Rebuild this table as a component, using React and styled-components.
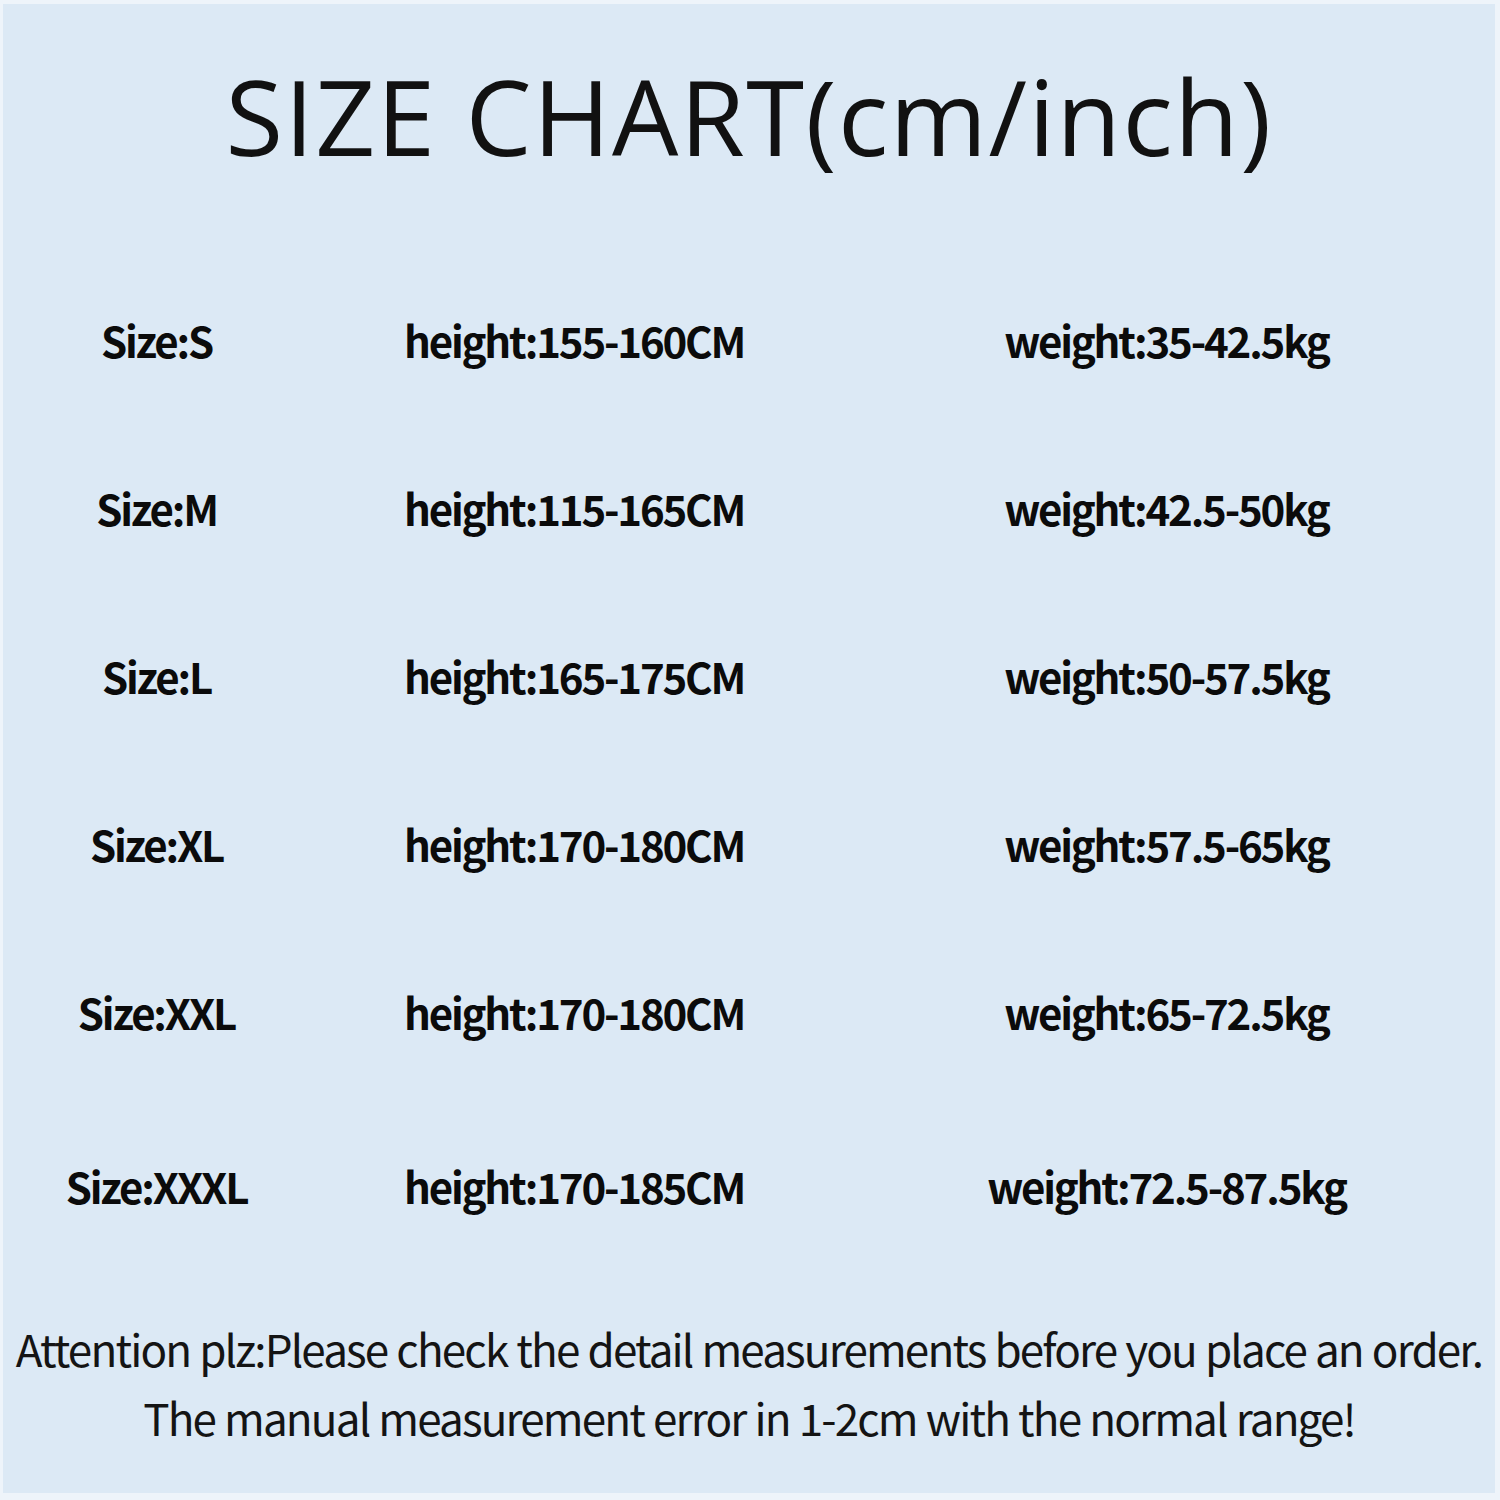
import React from 'react'
import styled, { createGlobalStyle } from 'styled-components';

const Global = createGlobalStyle`
    html, body {
        margin: 0;
        padding: 0;
        background: #ffffff;
    }
`;

const Sheet = styled.div`
    width: 1500px;
    height: 1500px;
    box-sizing: border-box;
    padding: 4px 5px 7px 3px;
    background: #eef4fa;
`;

const Panel = styled.div`
    height: 100%;
    background-color: #dce9f5;
    display: flex;
    flex-direction: column;
    align-items: stretch;
`;

const Title = styled.h1`
    margin: 42px 0 0;
    text-align: center;
    font-family: "Open Sans", "DejaVu Sans", sans-serif;
    font-weight: 400;
    font-size: 105px;
    line-height: 140px;
    color: #111111;
    letter-spacing: 1.5px;
    white-space: nowrap;
`;

const Table = styled.div`
    margin-top: 124px;
    display: grid;
    grid-template-columns: 307px 528px 1fr;
`;

const Cell = styled.div`
    height: ${p => p.tall ? 174 : 168}px;
    display: flex;
    align-items: flex-start;
    justify-content: ${p => p.left ? 'flex-start' : 'center'};
    padding-left: ${p => p.left ? '94px' : '0'};
    font-family: "Noto Sans CJK SC", "Noto Sans", sans-serif;
    font-weight: 700;
    font-size: 42px;
    line-height: 60px;
    color: #0b0b0b;
    letter-spacing: -2.2px;
    white-space: nowrap;
`;

const Notes = styled.div`
    margin-top: -10px;
    text-align: center;
    font-family: "Noto Sans CJK SC", "Noto Sans", sans-serif;
    font-weight: 400;
    font-size: 44px;
    line-height: 69px;
    color: #141414;
    letter-spacing: -1.85px;
    word-spacing: 1px;
    white-space: nowrap;
`;

const rows = [
    ['Size:S', 'height:155-160CM', 'weight:35-42.5kg'],
    ['Size:M', 'height:115-165CM', 'weight:42.5-50kg'],
    ['Size:L', 'height:165-175CM', 'weight:50-57.5kg'],
    ['Size:XL', 'height:170-180CM', 'weight:57.5-65kg'],
    ['Size:XXL', 'height:170-180CM', 'weight:65-72.5kg'],
    ['Size:XXXL', 'height:170-185CM', 'weight:72.5-87.5kg'],
];

export default function App() {
    return (
        <Sheet>
            <Global />
            <Panel>
                <Title>SIZE CHART(cm/inch)</Title>
                <Table>
                    {rows.map((row, i) => {
                        // the gap before the last row is a little wider
                        const tall = i === rows.length - 2;
                        return (
                            <React.Fragment key={row[0]}>
                                <Cell tall={tall}>{row[0]}</Cell>
                                <Cell tall={tall} left>{row[1]}</Cell>
                                <Cell tall={tall}>{row[2]}</Cell>
                            </React.Fragment>
                        )
                    })}
                </Table>
                <Notes>
                    Attention plz:Please check the detail measurements before you place an order.
                    <br />
                    The manual measurement error in 1-2cm with the normal range!
                </Notes>
            </Panel>
        </Sheet>
    )
}
